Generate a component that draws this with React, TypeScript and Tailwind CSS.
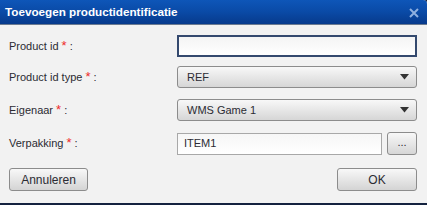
import React from "react";

const Star = () => <span className="text-[#ee2b2b] text-[13px] leading-none">*</span>;

const Arrow = () => (
  <svg width="9" height="6" viewBox="0 0 9 6" className="block">
    <polygon points="0,0 9,0 4.5,5.5" fill="#333" />
  </svg>
);

export default function App() {
  const font = { fontFamily: '"Liberation Sans", Arial, sans-serif' };
  return (
    <div className="w-[427px] h-[205px] bg-[#14223f] overflow-hidden" style={font}>
      <div className="w-[427px] h-[203px] bg-[#f2f2f2] flex flex-col rounded-tr-[4px] overflow-hidden">
        <div className="h-[25px] shrink-0 flex items-center justify-between pl-[5px] pr-[8px] bg-gradient-to-b from-[#0e56b8] via-[#0a4aa6] to-[#073a8c] border-b border-[#6b7a90]">
          <span className="text-white font-bold text-[11.7px]">Toevoegen productidentificatie</span>
          <svg width="10" height="10" viewBox="0 0 10 10" className="mt-[1px]">
            <path d="M1 1 L9 9 M9 1 L1 9" stroke="#8fb0e0" strokeWidth="2" />
          </svg>
        </div>
        <div className="flex flex-col pl-[9px] pr-[10px] pt-[10px] text-[11px] text-[#2b2b33]">
          <div className="flex items-center h-[22px]">
            <div className="w-[168px]">Product id <Star /> :</div>
            <div className="w-[240px] h-[22px] border-2 border-[#34496e] bg-gradient-to-b from-[#f4f4f4] to-[#ffffff]"></div>
          </div>
          <div className="flex items-center h-[22px] mt-[9px]">
            <div className="w-[168px]">Product id type <Star /> :</div>
            <div className="w-[240px] h-[22px] rounded-[3px] border border-[#8c8c8c] bg-gradient-to-b from-[#f8f8f8] to-[#d6d6d6] flex items-center justify-between pl-[9px] pr-[7px]">
              <span>REF</span>
              <Arrow />
            </div>
          </div>
          <div className="flex items-center h-[22px] mt-[11px]">
            <div className="w-[168px]">Eigenaar <Star /> :</div>
            <div className="w-[240px] h-[22px] rounded-[3px] border border-[#8c8c8c] bg-gradient-to-b from-[#f8f8f8] to-[#d6d6d6] flex items-center justify-between pl-[9px] pr-[7px]">
              <span>WMS Game 1</span>
              <Arrow />
            </div>
          </div>
          <div className="flex items-center h-[23px] mt-[11px]">
            <div className="w-[168px]">Verpakking <Star /> :</div>
            <div className="w-[205px] h-[22px] border border-[#a8a8a8] bg-gradient-to-b from-[#f6f6f6] to-[#ffffff] flex items-center pl-[6px]">
              ITEM1
            </div>
            <div className="ml-[5px] w-[30px] h-[23px] rounded-[3px] border border-[#8c8c8c] bg-gradient-to-b from-[#f8f8f8] to-[#d6d6d6] flex items-center justify-center leading-none pb-[3px]">
              ...
            </div>
          </div>
          <div className="flex items-center justify-between h-[23px] mt-[13px]">
            <div className="w-[79px] h-[23px] rounded-[3px] border border-[#8c8c8c] bg-gradient-to-b from-[#f8f8f8] to-[#d4d4d4] flex items-center justify-center text-[12px]">
              Annuleren
            </div>
            <div className="w-[80px] h-[23px] rounded-[3px] border border-[#8c8c8c] bg-gradient-to-b from-[#f8f8f8] to-[#d4d4d4] flex items-center justify-center text-[12px]">
              OK
            </div>
          </div>
        </div>
      </div>
    </div>
  );
}
